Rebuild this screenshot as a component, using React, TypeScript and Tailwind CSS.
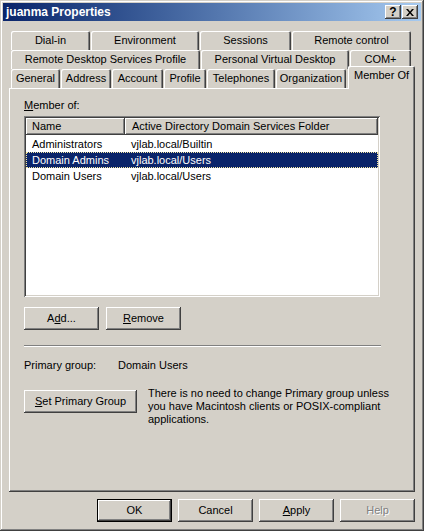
import React from 'react';

const raised =
  'shadow-[inset_-1px_-1px_#404040,inset_1px_1px_#ffffff,inset_-2px_-2px_#808080,inset_2px_2px_#d4d0c8]';

const Button = ({
  children,
  w = 'w-[75px]',
  isDefault = false,
  disabled = false,
}: {
  children: React.ReactNode;
  w?: string;
  isDefault?: boolean;
  disabled?: boolean;
}) => {
  if (isDefault) {
    return (
      <div className={`${w} h-[23px] border border-black bg-[#d4d0c8]`}>
        <div
          className={`h-full w-full flex items-center justify-center shadow-[inset_-1px_-1px_#404040,inset_1px_1px_#ffffff,inset_-2px_-2px_#808080]`}
        >
          {children}
        </div>
      </div>
    );
  }
  return (
    <div
      className={`${w} h-[23px] bg-[#d4d0c8] flex items-center justify-center ${raised} ${
        disabled ? 'text-[#808080] [text-shadow:1px_1px_0_#ffffff]' : ''
      }`}
    >
      {children}
    </div>
  );
};

const tabShadow = 'shadow-[inset_1px_1px_#ffffff,inset_-1px_0_#404040,inset_-2px_0_#808080]';

const Tab = ({ label, w }: { label: string; w: string }) => (
  <div className={`${w} h-[19px] pr-[1px]`}>
    <div className={`h-full w-full rounded-t-[2px] flex items-center justify-center ${tabShadow}`}>
      {label}
    </div>
  </div>
);

const rows = [
  { name: 'Administrators', folder: 'vjlab.local/Builtin' },
  { name: 'Domain Admins', folder: 'vjlab.local/Users', selected: true },
  { name: 'Domain Users', folder: 'vjlab.local/Users' },
];

export default function App() {
  return (
    <div className="w-[424px] h-[531px] bg-[#d4d0c8] p-[3px] text-[11px] leading-[13px] text-black font-['Liberation_Sans',Arial,sans-serif] shadow-[inset_-1px_-1px_#404040,inset_1px_1px_#d4d0c8,inset_-2px_-2px_#808080,inset_2px_2px_#ffffff] select-none">
      {/* title bar */}
      <div className="h-[18px] flex items-center justify-between pl-[3px] pr-[3px] bg-gradient-to-r from-[#0a246a] to-[#a6caf0]">
        <span className="text-white font-bold text-[12px]">juanma Properties</span>
        <div className="flex gap-[1px]">
          <div className={`w-[16px] h-[14px] bg-[#d4d0c8] flex items-center justify-center font-bold text-[12px] leading-none ${raised}`}>
            ?
          </div>
          <div className={`w-[16px] h-[14px] bg-[#d4d0c8] flex items-center justify-center ${raised}`}>
            <svg width="8" height="7" viewBox="0 0 8 7">
              <path d="M0 0h2l2 2.5L6 0h2L5 3.5 8 7H6L4 4.5 2 7H0l3-3.5z" fill="#000" />
            </svg>
          </div>
        </div>
      </div>

      {/* tabs */}
      <div className="pt-[10px] pl-[8px]">
        <div className="flex">
          <Tab label="Dial-in" w="w-[80px]" />
          <Tab label="Environment" w="w-[109px]" />
          <Tab label="Sessions" w="w-[92px]" />
          <Tab label="Remote control" w="w-[120px]" />
        </div>
        <div className="flex">
          <Tab label="Remote Desktop Services Profile" w="w-[190px]" />
          <Tab label="Personal Virtual Desktop" w="w-[149px]" />
          <Tab label="COM+" w="w-[62px]" />
        </div>
        <div className="flex items-end h-[19px]">
          <Tab label="General" w="w-[50px]" />
          <Tab label="Address" w="w-[51px]" />
          <Tab label="Account" w="w-[52px]" />
          <Tab label="Profile" w="w-[43px]" />
          <Tab label="Telephones" w="w-[69px]" />
          <Tab label="Organization" w="w-[71px]" />
          <div
            className={`relative z-10 ml-[1px] w-[67px] h-[23px] -mb-[1px] bg-[#d4d0c8] rounded-t-[2px] flex items-center justify-center pb-[5px] ${tabShadow}`}
          >
            Member Of
          </div>
        </div>
      </div>

      {/* panel */}
      <div className="ml-[6px] w-[406px] h-[404px] pt-[11px] px-[15px] shadow-[inset_-1px_-1px_#404040,inset_1px_1px_#ffffff,inset_-2px_-2px_#808080]">
        <div>
          <u>M</u>ember of:
        </div>
        <div className="mt-[4px] w-[356px] h-[181px] bg-white p-[2px] shadow-[inset_1px_1px_#808080,inset_-1px_-1px_#ffffff,inset_2px_2px_#404040,inset_-2px_-2px_#d4d0c8]">
          <div className="flex h-[17px]">
            <div className="w-[99px] h-full bg-[#d4d0c8] pl-[6px] flex items-center shadow-[inset_-1px_-1px_#404040,inset_1px_1px_#ffffff,inset_-2px_-2px_#808080]">
              Name
            </div>
            <div className="w-[253px] h-full bg-[#d4d0c8] pl-[7px] flex items-center shadow-[inset_-1px_-1px_#404040,inset_1px_1px_#ffffff,inset_-2px_-2px_#808080]">
              Active Directory Domain Services Folder
            </div>
          </div>
          <div className="pt-[1px]">
            {rows.map((r) => (
              <div
                key={r.name}
                className={`flex h-[16px] items-center ${
                  r.selected
                    ? 'bg-[#0a246a] text-white outline-1 outline-dotted outline-[#f4e7a0] -outline-offset-1'
                    : ''
                }`}
              >
                <div className="w-[99px] pl-[6px]">{r.name}</div>
                <div className="pl-[6px]">{r.folder}</div>
              </div>
            ))}
          </div>
        </div>

        <div className="mt-[10px] flex gap-[7px]">
          <Button>
            A<u>d</u>d...
          </Button>
          <Button>
            <u>R</u>emove
          </Button>
        </div>

        <div className="mt-[15px] w-[357px] h-[2px] border-t border-t-[#808080] border-b border-b-white" />

        <div className="mt-[12px] flex">
          <div className="w-[94px]">Primary group:</div>
          <div>Domain Users</div>
        </div>

        <div className="mt-[18px] flex items-start gap-[11px]">
          <Button w="w-[113px]">
            <u>S</u>et Primary Group
          </Button>
          <div className="-mt-[3px] leading-[13px] w-[252px]">
            There is no need to change Primary group unless
            <br />
            you have Macintosh clients or POSIX-compliant
            <br />
            applications.
          </div>
        </div>
      </div>

      {/* dialog buttons */}
      <div className="mt-[7px] flex justify-end gap-[6px] pr-[6px]">
        <Button isDefault>OK</Button>
        <Button>Cancel</Button>
        <Button>
          <u>A</u>pply
        </Button>
        <Button disabled>Help</Button>
      </div>
    </div>
  );
}
